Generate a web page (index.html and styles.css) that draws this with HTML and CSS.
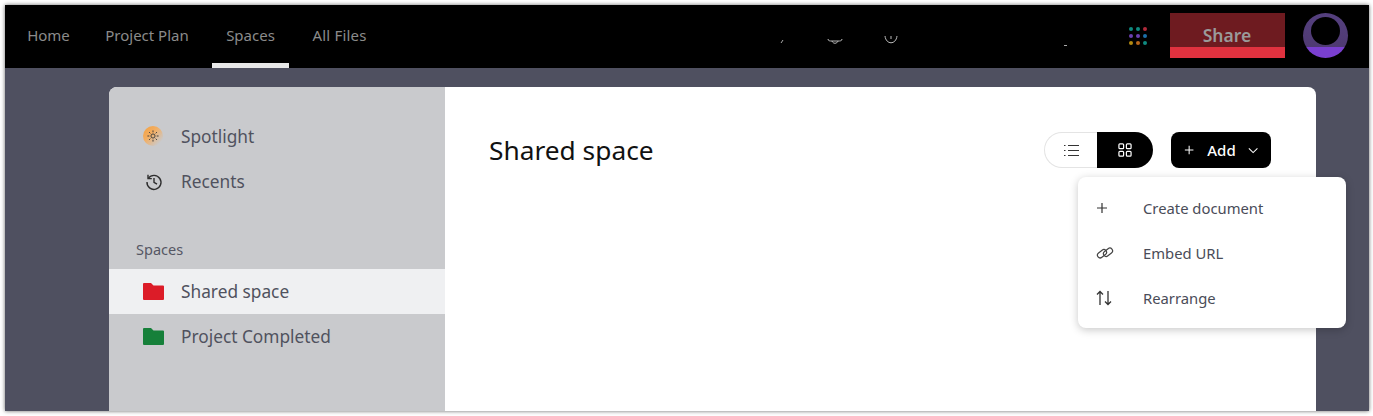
FILE: index.html
```html
<!DOCTYPE html>
<html lang="en">
<head>
    <meta charset="UTF-8">
    <title>Shared space</title>
    <link rel="stylesheet" href="styles.css">
</head>
<body>
    <div class="window">
        <!-- top bar -->
        <header class="topbar">
            <nav class="tabs">
                <a class="tab tab-home">Home</a>
                <a class="tab tab-plan">Project Plan</a>
                <a class="tab tab-spaces active">Spaces</a>
                <a class="tab tab-files">All Files</a>
            </nav>
            <div class="specks">
                <svg class="speck-a" width="6" height="6" viewBox="0 0 6 6"><path d="M2 5 L4 2" stroke="#aaa" fill="none"/></svg>
                <svg class="speck-b" width="16" height="8" viewBox="0 0 16 8"><path d="M1 2 C1 4 3 4 5 4 L11 4 C13 4 15 4 15 2 M5 4 C6 7 10 7 11 4" stroke="#bbb" fill="none"/></svg>
                <svg class="speck-c" width="16" height="10" viewBox="0 0 16 10"><path d="M2 1 C3 10 13 10 14 1" stroke="#bbb" fill="none"/><path d="M8 1 V4" stroke="#bbb"/></svg>
                <svg class="speck-d" width="4" height="3" viewBox="0 0 4 3"><path d="M0 1.5 H3" stroke="#aaa"/></svg>
            </div>
            <div class="dots">
                <i class="dot d-teal"></i><i class="dot d-teal"></i><i class="dot d-red"></i>
                <i class="dot d-purple"></i><i class="dot d-purple"></i><i class="dot d-blue"></i>
                <i class="dot d-gold"></i><i class="dot d-orange"></i><i class="dot d-teal"></i>
            </div>
            <button class="share">Share</button>
            <div class="avatar"><span class="avatar-hole"></span></div>
        </header>

        <div class="stage">
            <div class="card">
                <!-- sidebar -->
                <aside class="sidebar">
                    <ul class="menu">
                        <li class="menu-item">
                            <span class="icon">
                                <span class="spot">
                                    <svg width="12" height="12" viewBox="0 0 14 14" fill="none" stroke="#3a3a3a" stroke-width="1.1">
                                        <circle cx="7" cy="7" r="2.4"/>
                                        <path d="M7 0.5v2.2M7 11.3v2.2M0.5 7h2.2M11.3 7h2.2M2.4 2.4l1.5 1.5M10.1 10.1l1.5 1.5M2.4 11.6l1.5-1.5M10.1 3.9l1.5-1.5"/>
                                    </svg>
                                </span>
                            </span>
                            Spotlight
                        </li>
                        <li class="menu-item">
                            <span class="icon">
                                <svg class="clock" width="18" height="18" viewBox="0 0 18 18" fill="none" stroke="#2e2e2e" stroke-width="1.4">
                                    <path d="M3.4 5.2 A7 7 0 1 1 2 9"/>
                                    <path d="M3 1.8 V5.6 H6.8"/>
                                    <path d="M9 5 V9.4 L12 11.2"/>
                                </svg>
                            </span>
                            Recents
                        </li>
                    </ul>
                    <div class="side-label">Spaces</div>
                    <ul class="menu">
                        <li class="menu-item selected">
                            <span class="icon">
                                <svg width="21" height="17" viewBox="0 0 21 17"><path d="M0 1 Q0 0 1 0 H8 L10.5 2.5 H20 Q21 2.500 21 3.500 V16 Q21 17 20 17 H1 Q0 17 0 16 Z" fill="#dc1c28"/></svg>
                            </span>
                            Shared space
                        </li>
                        <li class="menu-item">
                            <span class="icon">
                                <svg width="21" height="17" viewBox="0 0 21 17"><path d="M0 1 Q0 0 1 0 H8 L10.5 2.5 H20 Q21 2.500 21 3.500 V16 Q21 17 20 17 H1 Q0 17 0 16 Z" fill="#16803a"/></svg>
                            </span>
                            Project Completed
                        </li>
                    </ul>
                </aside>

                <!-- main area -->
                <main class="content">
                    <div class="content-head">
                        <h1 class="title">Shared space</h1>
                        <div class="view-toggle">
                            <span class="view-btn">
                                <svg width="15" height="13" viewBox="0 0 15 13" fill="none" stroke="#333" stroke-width="1.2">
                                    <path d="M4 1.500h11M4 6.500h11M4 11.500h11"/>
                                    <path d="M0 1.500h1.500M0 6.500h1.500M0 11.500h1.500"/>
                                </svg>
                            </span>
                            <span class="view-btn on">
                                <svg width="14" height="14" viewBox="0 0 15 15" fill="none" stroke="#fff" stroke-width="1.300">
                                    <rect x="1" y="1" width="5" height="5" rx="1"/><rect x="9" y="1" width="5" height="5" rx="1"/>
                                    <rect x="1" y="9" width="5" height="5" rx="1"/><rect x="9" y="9" width="5" height="5" rx="1"/>
                                </svg>
                            </span>
                        </div>
                        <button class="add-btn">
                            <svg width="12" height="12" viewBox="0 0 12 12" stroke="#fff" stroke-width="1.2"><path d="M6 1v10M1 6h10"/></svg>
                            <span>Add</span>
                            <svg class="chev" width="12" height="7" viewBox="0 0 12 7" fill="none" stroke="#fff" stroke-width="1.2"><path d="M1 1l5 5 5-5"/></svg>
                        </button>
                    </div>
                </main>

                <!-- dropdown from Add -->
                <div class="dropdown">
                    <div class="drop-item">
                        <span class="drop-icon"><svg width="12" height="12" viewBox="0 0 12 12" stroke="#333" stroke-width="1.2"><path d="M6 1v10M1 6h10"/></svg></span>
                        Create document
                    </div>
                    <div class="drop-item">
                        <span class="drop-icon"><svg width="18" height="14" viewBox="0 0 18 14" fill="none" stroke="#444" stroke-width="1.2"><rect x="1" y="5" width="10" height="5.500" rx="2.750" transform="rotate(-38 6 7.750)"/><rect x="7" y="3.500" width="10" height="5.500" rx="2.750" transform="rotate(-38 12 6.250)"/></svg></span>
                        Embed URL
                    </div>
                    <div class="drop-item">
                        <span class="drop-icon"><svg width="16" height="16" viewBox="0 0 16 16" fill="none" stroke="#333" stroke-width="1.3"><path d="M4 15V1.5M1 4.5l3-3 3 3"/><path d="M12 1v13.5M9 11.5l3 3 3-3"/></svg></span>
                        Rearrange
                    </div>
                </div>
            </div>
        </div>
    </div>
</body>
</html>
```

FILE: styles.css
```css
* {
    box-sizing: border-box;
}
html, body {
    margin: 0;
    height: 100%;
    background: #fff;
    overflow: hidden;
}
body {
    padding: 5px 4px 5px 5px;
    font-family: "Noto Sans", Arial, sans-serif;
}

.window {
    height: 406px;
    background: #4f5060;
    box-shadow: 0 0 4px rgba(0, 0, 0, 0.6);
    display: flex;
    flex-direction: column;
    overflow: hidden;
}

/* top bar */
.topbar {
    height: 63px;
    flex: none;
    background: #000;
    display: flex;
    align-items: flex-start;
    padding-left: 10px;
}
.tabs {
    display: flex;
    gap: 10px;
    height: 63px;
    flex: none;
    width: 365px;
}
.tab {
    font-size: 15px;
    line-height: 61px;
    color: #8b8b8b;
    border-bottom: 5px solid transparent;
    height: 63px;
    white-space: nowrap;
    text-align: center;
}
.tab-home { width: 67px; }
.tab-plan { width: 110px; }
.tab-spaces { width: 77px; }
.tab-files { width: 81px; letter-spacing: 0.2px; }
.tab.active {
    border-bottom-color: #e8e8e8;
}
.specks {
    width: 749px;
    flex: none;
    position: relative;
    height: 63px;
}
.specks svg {
    position: absolute;
}
.speck-a { left: 399px; top: 33px; }
.speck-b { left: 447px; top: 32px; }
.speck-c { left: 503px; top: 30px; }
.speck-d { left: 684px; top: 39px; }

.dots {
    display: grid;
    grid-template-columns: repeat(3, 4px);
    gap: 3px;
    margin-top: 22px;
    flex: none;
    width: 18px;
}
.dot {
    width: 4px;
    height: 4px;
    border-radius: 50%;
}
.d-teal { background: #0f8a80; }
.d-red { background: #b02a3a; }
.d-purple { background: #6a3fb0; }
.d-blue { background: #1b6fa8; }
.d-gold { background: #b38a10; }
.d-orange { background: #b8651a; }

.share {
    margin: 8px 0 0 23px;
    width: 115px;
    height: 45px;
    flex: none;
    border: 0;
    padding: 0 1px 2px 0;
    background: linear-gradient(#6e1b20 0, #6e1b20 34px, #e0323f 34px);
    color: #9a9a9a;
    font-family: inherit;
    font-size: 17.5px;
    font-weight: 600;
}
.avatar {
    margin: 8px 0 0 18px;
    width: 45px;
    height: 45px;
    flex: none;
    border-radius: 50%;
    background: linear-gradient(#55407f 0, #4f3a72 34px, #7a3fd0 34px);
    overflow: hidden;
    display: flex;
    justify-content: center;
    padding-top: 4px;
}
.avatar-hole {
    width: 29px;
    height: 28px;
    border-radius: 50%;
    background: #000;
}

/* card */
.stage {
    flex: 1;
    padding: 19px 53px 0 104px;
}
.card {
    height: 100%;
    position: relative;
    display: flex;
    background: #fff;
    border-radius: 8px 8px 0 0;
}
.sidebar {
    width: 336px;
    flex: none;
    background: #c9cacd;
    border-radius: 8px 0 0 0;
    padding-top: 27px;
}
.menu {
    list-style: none;
    margin: 0;
    padding: 0;
}
.menu-item {
    height: 45px;
    display: flex;
    align-items: center;
    font-size: 17.3px;
    color: #50525e;
}
.menu-item.selected {
    background: #eff0f2;
}
.icon {
    width: 72px;
    padding-left: 34px;
    flex: none;
    display: flex;
    align-items: center;
}
.clock {
    margin-left: 2px;
}
.spot {
    width: 20px;
    height: 20px;
    margin-top: -1px;
    border-radius: 50%;
    background: linear-gradient(135deg, #f2a040 0, #f3ae62 40%, rgba(243, 174, 98, 0) 85%);
    display: flex;
    align-items: center;
    justify-content: center;
}
.side-label {
    margin: 35px 0 0 27px;
    font-size: 14.5px;
    height: 30px;
    line-height: 20px;
    color: #555764;
}

/* main */
.content {
    flex: 1;
    padding: 45px 45px 0 44px;
}
.content-head {
    display: flex;
    align-items: center;
}
.title {
    margin: 0;
    font-size: 26.3px;
    font-weight: 400;
    color: #111;
    flex: 1;
}
.view-toggle {
    display: flex;
    width: 109px;
    height: 36px;
}
.view-btn {
    width: 53px;
    flex: none;
    display: flex;
    align-items: center;
    justify-content: center;
    border: 1px solid #e4e4e4;
    border-right: 0;
    border-radius: 18px 0 0 18px;
}
.view-btn.on {
    width: 56px;
    border: 0;
    border-radius: 0 18px 18px 0;
    background: #000;
}
.add-btn {
    margin-left: 18px;
    width: 100px;
    height: 36px;
    flex: none;
    background: #000;
    border: 0;
    border-radius: 8px;
    color: #fff;
    font-family: inherit;
    font-size: 15px;
    font-weight: 500;
    display: flex;
    align-items: center;
    padding: 0 13px;
    gap: 13px;
}
.add-btn .chev {
    margin-left: -1px;
}

/* dropdown */
.dropdown {
    position: absolute;
    left: 969px;
    top: 90px;
    width: 268px;
    height: 151px;
    background: #fff;
    border-radius: 8px;
    box-shadow: 0 2px 8px rgba(0, 0, 0, 0.22);
    padding: 8px 0;
}
.drop-item {
    height: 45px;
    display: flex;
    align-items: center;
    font-size: 14.8px;
    color: #4a4c58;
}
.drop-icon {
    width: 65px;
    flex: none;
    padding-left: 18px;
    display: flex;
    align-items: center;
}
```
